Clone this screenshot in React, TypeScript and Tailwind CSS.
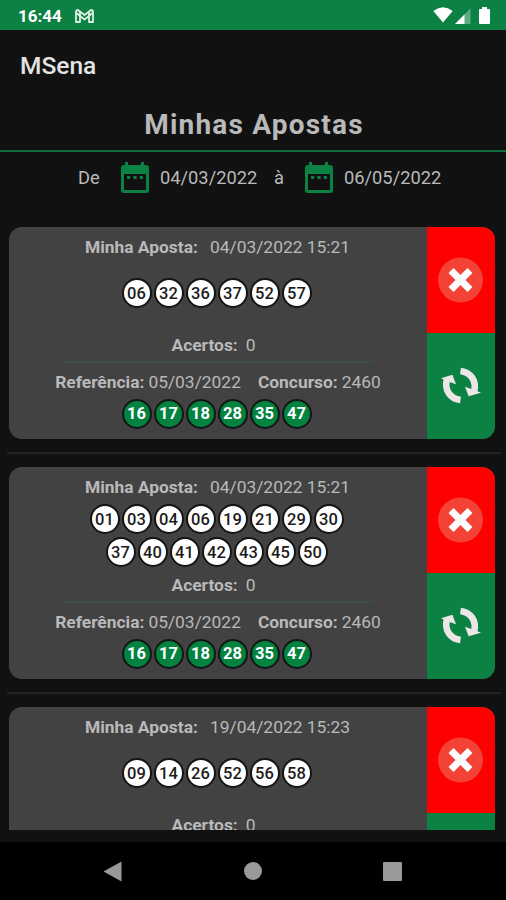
import clsx from 'clsx'

interface Bet {
  id: number
  date: string
  numbers: string[][]
  hits: number
  result?: {
    date: string
    contest: string
    drawn: string[]
  }
}

const lastResult = {
  date: '05/03/2022',
  contest: '2460',
  drawn: ['16', '17', '18', '28', '35', '47'],
}

const bets: Bet[] = [
  {
    id: 1,
    date: '04/03/2022 15:21',
    numbers: [['06', '32', '36', '37', '52', '57']],
    hits: 0,
    result: lastResult,
  },
  {
    id: 2,
    date: '04/03/2022 15:21',
    numbers: [
      ['01', '03', '04', '06', '19', '21', '29', '30'],
      ['37', '40', '41', '42', '43', '45', '50'],
    ],
    hits: 0,
    result: lastResult,
  },
  {
    id: 3,
    date: '19/04/2022 15:23',
    numbers: [['09', '14', '26', '52', '56', '58']],
    hits: 0,
  },
]

function StatusBar() {
  return (
    <div className="flex h-[30px] shrink-0 items-center bg-[#0c8144] pt-[2px] pr-[16px] pl-[18px] text-white">
      <span className="text-[17px] leading-none font-bold">16:44</span>
      <svg className="-mt-px ml-[13px]" width="19" height="14" viewBox="0 0 19 14" fill="none" stroke="#dcefe2" strokeWidth="1.8" strokeLinejoin="round">
        <path d="M1 13V3Q1 1 3 1L9.5 6L16 1Q18 1 18 3V13H14V7L9.5 10.5L5 7V13Z" />
        <path d="M5 7V2.5M14 7V2.5M1.5 4L5 7M17.5 4L14 7" />
      </svg>
      <svg className="-mt-[2px] ml-auto" width="20" height="16" viewBox="0 0 20 16">
        <path d="M0.3 4Q10 -3.4 19.7 4L10 15.5Z" fill="white" />
      </svg>
      <svg className="-mt-px ml-[2px]" width="16" height="16" viewBox="0 0 16 16">
        <path d="M0 16L15.5 0.5V16Z" fill="white" fillOpacity="0.35" />
        <path d="M0 16L9.5 6.5V16Z" fill="white" />
      </svg>
      <svg className="-mt-[2px] ml-[8px]" width="11" height="17" viewBox="0 0 11 17">
        <path d="M3 0H8V2H10Q11 2 11 3V16Q11 17 10 17H1Q0 17 0 16V3Q0 2 1 2H3Z" fill="white" />
      </svg>
    </div>
  )
}

function CalendarIcon() {
  return (
    <svg width="30" height="32" viewBox="0 0 30 32" className="-mt-px shrink-0">
      <path
        fillRule="evenodd"
        fill="#0c8144"
        d="M5 0H8V3H21V0H24V3H26Q29 3 29 6V28Q29 31 26 31H4Q1 31 1 28V6Q1 3 4 3H5ZM4 12V28H26V12Z"
      />
      <path fill="#0c8144" d="M7 14H10.2V17H7ZM13.4 14H16.6V17H13.4ZM19.8 14H23V17H19.8Z" />
    </svg>
  )
}

function Ball({ value, green }: { value: string; green?: boolean }) {
  return (
    <div
      className={clsx(
        'flex h-[30px] w-[30px] items-center justify-center rounded-full border-2 border-[#151515] pt-[2px] text-[16.5px] leading-none',
        green ? 'bg-[#04823f] font-bold text-white' : 'bg-white font-medium text-[#1c1c1c]'
      )}
    >
      {value}
    </div>
  )
}

function BetCard({ bet }: { bet: Bet }) {
  return (
    <div className="flex h-[212px] overflow-hidden rounded-[13px] bg-[#424242]">
      <div className="flex w-[418px] flex-col items-center text-[17.4px] leading-[22px] text-[#b9b9b9]">
        <div className="flex pt-[9px] pr-px">
          <span className="font-bold">Minha Aposta:</span>
          <span className="ml-[12px]">{bet.date}</span>
        </div>

        {/* chosen numbers */}
        <div
          className={clsx(
            'flex h-[76px] flex-col items-center justify-center gap-[3px] pr-[3px]',
            bet.numbers.length === 1 && 'pb-[5px]'
          )}
        >
          {bet.numbers.map((row, i) => (
            <div key={i} className="flex gap-[2px]">
              {row.map((n) => (
                <Ball key={n} value={n} />
              ))}
            </div>
          ))}
        </div>

        <div className="flex pr-[9px]">
          <span className="font-bold">Acertos:</span>
          <span className="ml-[8px]">{bet.hits}</span>
        </div>
        <div className="mt-[5px] h-[2px] w-[312px] bg-[#38503f]" />

        {/* official draw */}
        {bet.result && (
          <>
            <div className="mt-[8px] flex">
              <span className="font-bold">Referência:</span>
              <span className="ml-[4px]">{bet.result.date}</span>
              <span className="ml-[17px] font-bold">Concurso:</span>
              <span className="ml-[4px]">{bet.result.contest}</span>
            </div>
            <div className="mt-[6px] flex gap-[2px] pr-[3px]">
              {bet.result.drawn.map((n) => (
                <Ball key={n} value={n} green />
              ))}
            </div>
          </>
        )}
      </div>

      <div className="flex w-[68px] flex-col">
        <button className="flex h-[106px] items-center justify-center bg-[#fe0000]">
          <svg width="46" height="46" viewBox="0 0 46 46">
            <circle cx="22.5" cy="23" r="22.5" fill="#f44336" />
            <path d="M13 13.5L32 32.5M32 13.5L13 32.5" stroke="white" strokeWidth="7" />
          </svg>
        </button>
        <button className="flex h-[106px] items-center justify-center bg-[#0c8144]">
          <svg width="40" height="38" viewBox="0 0 40 38">
            <g>
              <path d="M19.5 4C30 5.5 36 14 33 25" fill="none" stroke="#ece6e6" strokeWidth="6.6" />
              <path d="M24 19.8L27.6 29.3L40 25.8L34.5 23.5Z" fill="#ece6e6" />
            </g>
            <g transform="rotate(180 19.5 18.5)">
              <path d="M19.5 4C30 5.5 36 14 33 25" fill="none" stroke="#ece6e6" strokeWidth="6.6" />
              <path d="M24 19.8L27.6 29.3L39 25.8L34.5 23.5Z" fill="#ece6e6" />
            </g>
          </svg>
        </button>
      </div>
    </div>
  )
}

export default function App() {
  return (
    <div className="flex h-[900px] w-[506px] flex-col overflow-hidden bg-[#111111] font-['Roboto',sans-serif]">
      <StatusBar />

      <header className="flex h-[70px] shrink-0 items-center pt-[3px] pl-[20px]">
        <h1 className="text-[24.5px] font-medium text-[#e3e3e3]">MSena</h1>
      </header>

      <div className="flex h-[52px] shrink-0 items-center justify-center border-b-2 border-[#0d6e3b] pl-[2px]">
        <h2 className="text-[28px] leading-none font-bold tracking-[1.2px] text-[#b9b9b9]">Minhas Apostas</h2>
      </div>

      {/* date range */}
      <div className="flex h-[51px] shrink-0 items-center pt-px pl-[78px] text-[18.3px] text-[#b9b9b9]">
        <span className="w-[42px]">De</span>
        <CalendarIcon />
        <span className="ml-[10px] w-[104px]">04/03/2022</span>
        <span className="ml-[10px] w-[30px]">à</span>
        <CalendarIcon />
        <span className="ml-[10px]">06/05/2022</span>
      </div>

      <div className="mt-[23.5px] h-[603px] shrink-0 overflow-hidden pr-[11px] pl-[9px]">
        {bets.map((bet, i) => (
          <div key={bet.id}>
            {i > 0 && (
              <div className="-mr-[6px] -ml-[2px] flex h-[28px] items-center">
                <div className="h-[2px] w-full bg-[#222]" />
              </div>
            )}
            <BetCard bet={bet} />
          </div>
        ))}
      </div>

      <nav className="mt-auto flex h-[58px] shrink-0 items-center bg-black pl-[103px]">
        <svg width="19" height="21" viewBox="0 0 19 21">
          <path d="M18.5 0.5V20.5L0.5 10.5Z" fill="#999" />
        </svg>
        <div className="ml-[122px] h-[18px] w-[18px] rounded-full bg-[#999]" />
        <div className="ml-[121px] h-[19px] w-[19px] rounded-[1px] bg-[#999]" />
      </nav>
    </div>
  )
}
